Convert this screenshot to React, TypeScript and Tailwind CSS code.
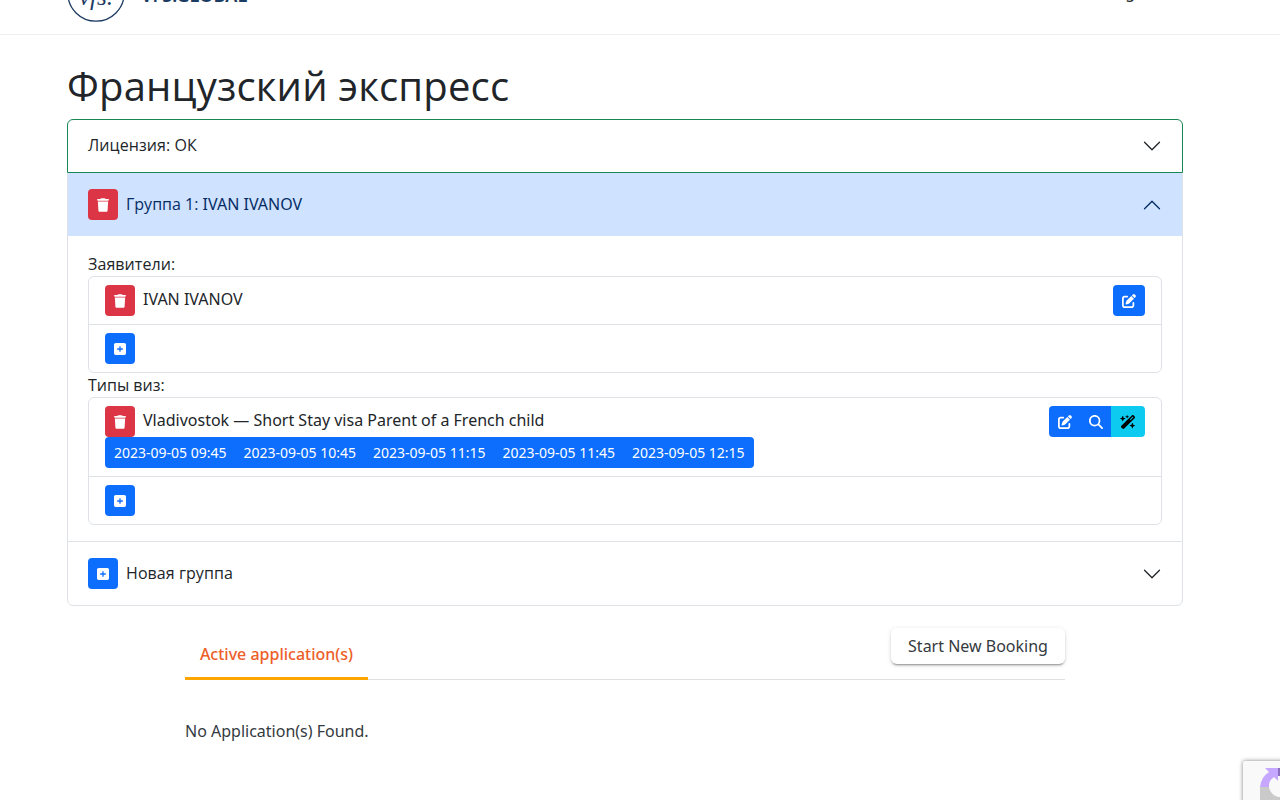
import { FaTrash, FaPenToSquare, FaSquarePlus, FaWandMagicSparkles, FaMagnifyingGlass } from 'react-icons/fa6';

function DeleteButton() {
  return (
    <button className="w-[30px] h-[31px] bg-[#dc3545] rounded flex items-center justify-center shrink-0">
      <FaTrash className="text-white w-[12px] h-[14px]" />
    </button>
  );
}

function AddButton() {
  return (
    <button className="w-[30px] h-[31px] bg-[#0d6efd] rounded flex items-center justify-center shrink-0">
      <FaSquarePlus className="text-white w-[12px] h-[14px]" />
    </button>
  );
}

function Chevron({ up, color }: { up?: boolean; color: string }) {
  return (
    <svg width="20" height="20" viewBox="0 0 16 16" fill={color} className={up ? 'rotate-180' : ''}>
      <path fillRule="evenodd" d="M1.646 4.646a.5.5 0 0 1 .708 0L8 10.293l5.646-5.647a.5.5 0 0 1 .708.708l-6 6a.5.5 0 0 1-.708 0l-6-6a.5.5 0 0 1 0-.708z" />
    </svg>
  );
}

const slots = ['2023-09-05 09:45', '2023-09-05 10:45', '2023-09-05 11:15', '2023-09-05 11:45', '2023-09-05 12:15'];

export default function App() {
  return (
    <div className="h-[800px] overflow-hidden bg-white relative font-['Noto_Sans',sans-serif] text-[#212529]">
      {/* Header, scrolled off the top */}
      <header className="h-[35px] border-b border-[#f0f0f0] flex items-end justify-between pl-[67px] pr-[131px] overflow-hidden">
        <div className="flex items-end gap-[16px] h-full">
          <svg width="58" height="58" viewBox="0 0 58 58" className="mb-[12px] shrink-0 text-[#1c3b63]">
            <circle cx="29" cy="29" r="28.2" fill="none" stroke="currentColor" strokeWidth="1.3" />
            <text x="29" y="41" textAnchor="middle" fontSize="25" fontStyle="italic" fill="currentColor" fontFamily="'Liberation Serif', serif">vfs.</text>
          </svg>
          <span className="mb-[30px] text-[18px] leading-[18px] font-semibold tracking-[0.1px] text-[#1c3b63] whitespace-nowrap">VFS.GLOBAL</span>
        </div>
        <span className="mb-[33px] text-[16px] leading-[17px] text-[#212529]">Login</span>
      </header>

      <main className="pl-[67px] w-[1183px]">
        <h1 className="text-[40px] leading-[48px] mt-[27px] mb-[9px] font-normal tracking-[0.16px] font-['Open_Sans',sans-serif]">Французский экспресс</h1>

        {/* Accordion */}
        <div className="w-[1116px] text-[16px]">
          <div className="h-[54px] border border-[#198754] rounded-t-[6px] flex items-center justify-between pl-[20px] pr-[20px]">
            <span className="relative -top-px tracking-[0.08px] font-['Open_Sans',sans-serif]">Лицензия: ОК</span>
            <Chevron color="#212529" />
          </div>

          <div className="border-x border-[#dee2e6]">
            <div className="h-[63px] bg-[#cfe2ff] flex items-center justify-between pl-[20px] pr-[20px] text-[#052c65]">
              <div className="flex items-center gap-[8px]">
                <DeleteButton />
                <span className="relative -top-px"><span className="font-['Open_Sans',sans-serif]">Группа 1:</span> IVAN IVANOV</span>
              </div>
              <Chevron up color="#052c65" />
            </div>

            <div className="px-[20px] pt-[16px] pb-[16px]">
              <div className="leading-[24px] tracking-[0.08px] font-['Open_Sans',sans-serif]">Заявители:</div>
              <div className="border border-[#dee2e6] rounded-[6px]">
                <div className="h-[48px] border-b border-[#dee2e6] flex items-center justify-between pl-[16px] pr-[16px]">
                  <div className="flex items-center gap-[8px]">
                    <DeleteButton />
                    <span className="relative -top-[2px]">IVAN IVANOV</span>
                  </div>
                  <button className="w-[32px] h-[31px] bg-[#0d6efd] rounded flex items-center justify-center">
                    <FaPenToSquare className="text-white w-[14px] h-[14px]" />
                  </button>
                </div>
                <div className="h-[47px] flex items-center pl-[16px]">
                  <AddButton />
                </div>
              </div>

              <div className="leading-[24px] font-['Open_Sans',sans-serif]">Типы виз:</div>
              <div className="border border-[#dee2e6] rounded-[6px]">
                <div className="h-[79px] border-b border-[#dee2e6] pt-[8px] pl-[16px] pr-[16px]">
                  <div className="flex items-start justify-between h-[31px]">
                    <div className="flex items-center gap-[8px]">
                      <DeleteButton />
                      <span className="relative -top-[2px]">Vladivostok — Short Stay visa Parent of a French child</span>
                    </div>
                    <div className="flex h-[31px] rounded overflow-hidden">
                      <button className="w-[31px] bg-[#0d6efd] flex items-center justify-center">
                        <FaPenToSquare className="text-white w-[14px] h-[14px]" />
                      </button>
                      <button className="w-[31px] bg-[#0d6efd] flex items-center justify-center">
                        <FaMagnifyingGlass className="text-white w-[14px] h-[14px]" />
                      </button>
                      <button className="w-[34px] bg-[#0dcaf0] flex items-center justify-center">
                        <FaWandMagicSparkles className="text-black w-[16px] h-[14px]" />
                      </button>
                    </div>
                  </div>
                  <div className="inline-flex h-[31px] bg-[#0d6efd] rounded items-center text-white text-[14px] pl-[9px] pr-[9px] gap-[17px]">
                    {slots.map((s) => (
                      <span key={s}>{s}</span>
                    ))}
                  </div>
                </div>
                <div className="h-[47px] flex items-center pl-[16px]">
                  <AddButton />
                </div>
              </div>
            </div>
          </div>

          <div className="h-[65px] border border-[#dee2e6] rounded-b-[6px] flex items-center justify-between pl-[20px] pr-[20px]">
            <div className="flex items-center gap-[8px]">
              <AddButton />
              <span className="relative -top-px tracking-[0.08px] font-['Open_Sans',sans-serif]">Новая группа</span>
            </div>
            <Chevron color="#212529" />
          </div>
        </div>
      </main>

      {/* Applications */}
      <section className="ml-[185px] w-[880px] mt-[22px]">
        <div className="h-[52px] border-b border-[#e0e0e0] flex items-start justify-between">
          <div className="h-[52px] w-[183px] border-b-[3px] border-[#ffa500] flex items-center justify-center text-[#ed5e28] text-[16px] font-medium pt-[3px]">
            Active application(s)
          </div>
          <button className="w-[174px] h-[36px] bg-white rounded-[6px] shadow-[0_3px_1px_-2px_rgba(0,0,0,0.2),0_2px_2px_0_rgba(0,0,0,0.14),0_1px_5px_0_rgba(0,0,0,0.12)] text-[16px] leading-[36px] text-[#343a40]">
            Start New Booking
          </button>
        </div>
        <p className="mt-[41px] text-[16px] leading-[20px] text-[#343a40]">No Application(s) Found.</p>
      </section>

      {/* reCAPTCHA badge */}
      <div className="absolute left-[1243px] top-[761px] w-[60px] h-[60px] bg-[#f9f9f9] rounded-[2px] shadow-[0_0_4px_rgba(0,0,0,0.5)] overflow-hidden">
        <svg width="60" height="60" viewBox="0 0 60 60">
          <path d="M17 26A20 20 0 0 1 26 11L22 7H35V20L31 16A11 11 0 0 0 26 26Z" fill="#c5a7ff" />
          <path d="M35 7H40V15H35Z" fill="#8e6fbf" />
          <path d="M17 26H26C27 32 32 36 37 36V39H17Z" fill="#cacaca" />
        </svg>
      </div>
    </div>
  );
}
